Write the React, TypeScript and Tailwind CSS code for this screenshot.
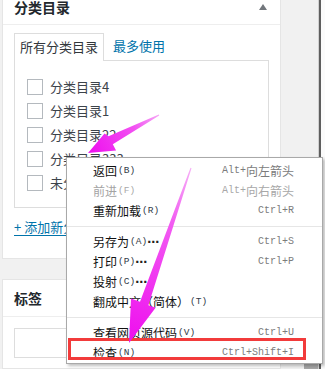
import React from "react";

const CJK = { fontFamily: '"Noto Sans CJK SC", "Noto Sans", sans-serif' };
const MONO = { fontFamily: '"Liberation Mono", "DejaVu Sans Mono", monospace' };

function Lbl({ cn, lat, dots, disabled }: { cn: string; lat: string; dots?: boolean; disabled?: boolean }) {
  return (
    <span className={"flex items-center " + (disabled ? "text-[#a3a3a3]" : "text-[#111]")}>
      <span className="text-[12px] leading-[20px] [text-spacing-trim:space-all]" style={CJK}>{cn}</span>
      <span className={"ml-px text-[9.5px] leading-[20px] " + (disabled ? "text-[#a8a8a8]" : "text-[#333b48]")} style={MONO}>{lat}</span>
      {dots ? <span className="text-[12px] leading-[20px] text-[#222] font-bold tracking-[-1px]" style={{ fontFamily: '"DejaVu Sans", sans-serif' }}>⋯</span> : null}
    </span>
  );
}

function Short({ parts, disabled }: { parts: { t: string; cjk?: boolean }[]; disabled?: boolean }) {
  return (
    <span className={"flex items-center " + (disabled ? "text-[#a8a8a8]" : "text-[#7c7c7c]")}>
      {parts.map((p, i) =>
        p.cjk ? (
          <span key={i} className="text-[12px] leading-[20px]" style={CJK}>{p.t}</span>
        ) : (
          <span key={i} className="text-[10px] leading-[20px]" style={MONO}>{p.t}</span>
        )
      )}
    </span>
  );
}

function Item({ children, right }: { children: React.ReactNode; right?: React.ReactNode }) {
  return (
    <div className="h-[20px] flex items-center justify-between pl-[26px] pr-[28px]">
      {children}
      {right}
    </div>
  );
}

function Sep() {
  return (
    <div className="h-[11px] flex items-center">
      <div className="h-px w-full bg-[#e6e6e6]" />
    </div>
  );
}

export default function App() {
  const rows = ["分类目录4", "分类目录1", "分类目录22", "分类目录333", "未分类"];
  return (
    <div className="relative w-[325px] h-[369px] overflow-hidden bg-[#f1f1f1] flex" style={CJK}>
      {/* left column */}
      <div className="ml-[2px] w-[279px] flex flex-col">
        <div className="h-[259px] bg-white border-x border-b border-[#e5e5e5] flex flex-col">
          <div className="h-[25px] border-b border-[#eeeeee] flex items-start justify-between pl-[11px] pr-[13px]">
            <span className="text-[14px] leading-[14px] font-bold text-[#23282d]">分类目录</span>
            <svg width="8" height="6" viewBox="0 0 8 6" className="mt-[4px]">
              <polygon points="4,0 8,6 0,6" fill="#72777c" />
            </svg>
          </div>
          <div className="px-[11px] pt-[8px] flex flex-col">
            <div className="flex items-start">
              <div className="relative z-10 -mb-px h-[28px] px-[5px] border border-b-0 border-[#dddddd] bg-white text-[13px] leading-[26px] text-[#32373c]">
                所有分类目录
              </div>
              <div className="ml-[9px] text-[13px] leading-[26px] text-[#0073aa]">最多使用</div>
            </div>
            <div className="h-[148px] border border-[#dddddd] bg-white pt-[18px] pl-[12px] flex flex-col">
              {rows.map((r) => (
                <div key={r} className="h-[16px] mb-[8px] flex items-center">
                  <div className="w-[16px] h-[16px] border border-[#b4b9be] bg-white shrink-0" />
                  <span className="ml-[7px] text-[13px] leading-[16px] text-[#3c434a]">{r}</span>
                </div>
              ))}
            </div>
            <div className="mt-[9px] h-[20px] text-[13px] leading-[20px] text-[#0073aa] underline underline-offset-[3px] whitespace-nowrap">
              + 添加新分类目录
            </div>
          </div>
        </div>
        <div className="mt-[20px] flex-1 bg-white border border-[#e5e5e5] flex flex-col">
          <div className="h-[37px] border-b border-[#eeeeee] flex items-center pl-[11px]">
            <span className="text-[14px] font-semibold text-[#23282d] leading-[20px]">标签</span>
          </div>
          <div className="mt-[11px] mx-[11px] h-[30px] border border-[#dddddd] bg-white" />
        </div>
      </div>
      {/* right strip */}
      <div className="w-[37px] flex flex-col">
        <div className="flex-1" />
        <div className="ml-[23px] h-[6px] bg-[#a6a6a6]" />
      </div>
      <div className="w-px bg-[#d0d0d0]" />
      <div className="w-[2px] bg-[#5e5e5e]" />
      <div className="w-[4px] bg-[#fbfbfb]" />

      {/* context menu */}
      <div className="absolute left-[66px] top-[157px] w-[257px] bg-white border border-[#a9a9a9] shadow-[2px_2px_3px_rgba(0,0,0,0.25)] pt-[3px] flex flex-col z-20">
        <Item right={<Short parts={[{ t: "Alt+" }, { t: "向左箭头", cjk: true }]} />}>
          <Lbl cn="返回" lat="(B)" />
        </Item>
        <Item right={<Short disabled parts={[{ t: "Alt+" }, { t: "向右箭头", cjk: true }]} />}>
          <Lbl cn="前进" lat="(F)" disabled />
        </Item>
        <Item right={<Short parts={[{ t: "Ctrl+R" }]} />}>
          <Lbl cn="重新加载" lat="(R)" />
        </Item>
        <Sep />
        <Item right={<Short parts={[{ t: "Ctrl+S" }]} />}>
          <Lbl cn="另存为" lat="(A)" dots />
        </Item>
        <Item right={<Short parts={[{ t: "Ctrl+P" }]} />}>
          <Lbl cn="打印" lat="(P)" dots />
        </Item>
        <Item>
          <Lbl cn="投射" lat="(C)" dots />
        </Item>
        <Item>
          <Lbl cn="翻成中文（简体）" lat="(T)" />
        </Item>
        <Sep />
        <Item right={<Short parts={[{ t: "Ctrl+U" }]} />}>
          <Lbl cn="查看网页源代码" lat="(V)" />
        </Item>
        <Item right={<Short parts={[{ t: "Ctrl+Shift+I" }]} />}>
          <Lbl cn="检查" lat="(N)" />
        </Item>
      </div>

      {/* red highlight */}
      <div className="absolute left-[68px] top-[338px] w-[238px] h-[22px] border-[3px] border-[#f23b3b] z-30" />

      {/* arrows */}
      <svg className="absolute left-0 top-0 z-40 pointer-events-none" width="325" height="369" viewBox="0 0 325 369">
        <defs>
          <linearGradient id="g1" x1="159" y1="115" x2="88" y2="153" gradientUnits="userSpaceOnUse">
            <stop offset="0" stopColor="#f5a6f5" />
            <stop offset="0.35" stopColor="#f250f2" />
            <stop offset="1" stopColor="#ee0eee" />
          </linearGradient>
          <linearGradient id="g2" x1="191" y1="168" x2="130" y2="342" gradientUnits="userSpaceOnUse">
            <stop offset="0" stopColor="#f6b0f6" />
            <stop offset="0.3" stopColor="#f25ef2" />
            <stop offset="1" stopColor="#ee0eee" />
          </linearGradient>
        </defs>
        <polygon
          points="158.8,114.6 108.5,136.3 104.5,133.5 88,153 116.1,150.4 112.8,144.2 159.2,115.4"
          fill="url(#g1)"
        />
        <polygon
          points="190.5,167.8 140.0,301.7 131.0,298.6 129,343 155.6,307.8 148.4,305.2 191.5,168.2"
          fill="url(#g2)"
        />
      </svg>
    </div>
  );
}
